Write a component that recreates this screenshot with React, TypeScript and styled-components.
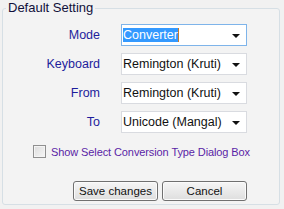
import React from 'react'
import styled, { createGlobalStyle } from 'styled-components'

const rows = [
  { label: 'Mode', value: 'Converter', focused: true },
  { label: 'Keyboard', value: 'Remington (Kruti)' },
  { label: 'From', value: 'Remington (Kruti)' },
  { label: 'To', value: 'Unicode (Mangal)' },
]

const App: React.FC = () => {
  return (
    <Page>
      <GlobalStyle />
      <Panel>
        <Legend>Default Setting</Legend>
        <FormGrid>
          {rows.map((row) => (
            <React.Fragment key={row.label}>
              <Label>{row.label}</Label>
              <Combo focused={row.focused}>
                {row.focused ? <Selected>{row.value}</Selected> : <span>{row.value}</span>}
                <Arrow />
              </Combo>
            </React.Fragment>
          ))}
        </FormGrid>
        <CheckRow>
          <CheckBox />
          <CheckText>Show Select Conversion Type Dialog Box</CheckText>
        </CheckRow>
        <ButtonRow>
          <Button>Save changes</Button>
          <Button>Cancel</Button>
        </ButtonRow>
      </Panel>
    </Page>
  )
}

const GlobalStyle = createGlobalStyle`
  body {
    margin: 0;
    background: #f1f1f1;
    font-family: 'Liberation Sans', Arial, sans-serif;
  }
`

const Page = styled.div`
  width: 284px;
  height: 209px;
  padding: 0 2px;
  box-sizing: border-box;
  background: #f1f1f1;
`

const Panel = styled.fieldset`
  margin: 0;
  width: 278px;
  box-sizing: border-box;
  padding: 0 0 3px 0;
  border: 1px solid #d6dfe5;
  border-radius: 3px;
  background: #f3f3f3;
`

const Legend = styled.legend`
  margin-left: 3px;
  padding: 0 2px;
  font-size: 13px;
  line-height: 16px;
  color: #10103a;
`

const FormGrid = styled.div`
  display: grid;
  grid-template-columns: 97px 126px;
  column-gap: 21px;
  row-gap: 7px;
  padding-top: 8px;
`

const Label = styled.div`
  text-align: right;
  font-size: 12.5px;
  line-height: 22px;
  color: #1d1d9c;
`

const Combo = styled.div<{ focused?: boolean }>`
  position: relative;
  height: 22px;
  box-sizing: border-box;
  border: 1px solid ${(p) => (p.focused ? '#7eb4ea' : '#d9dbe0')};
  background: #fff;
  font-size: 12.5px;
  line-height: 20px;
  padding-left: 1px;
  color: #111;
  white-space: nowrap;
`

const Selected = styled.span`
  background: #3399ff;
  color: #fff;
  border-right: 1px solid #c87a2a;
`

const Arrow = styled.span`
  position: absolute;
  right: 6px;
  top: 9px;
  width: 0;
  height: 0;
  border-left: 4px solid transparent;
  border-right: 4px solid transparent;
  border-top: 4px solid #111;
`

const CheckRow = styled.div`
  display: flex;
  align-items: center;
  margin-top: 12px;
  margin-left: 30px;
  height: 13px;
`

const CheckBox = styled.span`
  width: 13px;
  height: 13px;
  box-sizing: border-box;
  border: 1px solid #8f8f8f;
  background: linear-gradient(135deg, #dcdcdc, #f6f6f6);
  box-shadow: inset 0 0 0 1px #f4f4f4;
`

const CheckText = styled.span`
  margin-left: 5px;
  font-size: 11px;
  letter-spacing: -0.1px;
  color: #5a1ea6;
  white-space: nowrap;
`

const ButtonRow = styled.div`
  display: flex;
  gap: 4px;
  margin-top: 23px;
  margin-left: 70px;
`

const Button = styled.button`
  width: 85px;
  height: 20px;
  padding: 0;
  box-sizing: border-box;
  border: 1px solid #707070;
  border-radius: 3px;
  background: linear-gradient(#f6f6f6, #dedede);
  box-shadow: inset 0 0 0 1px #fbfbfb;
  font-family: 'Liberation Sans', Arial, sans-serif;
  font-size: 11.5px;
  color: #111;
`

export default App
